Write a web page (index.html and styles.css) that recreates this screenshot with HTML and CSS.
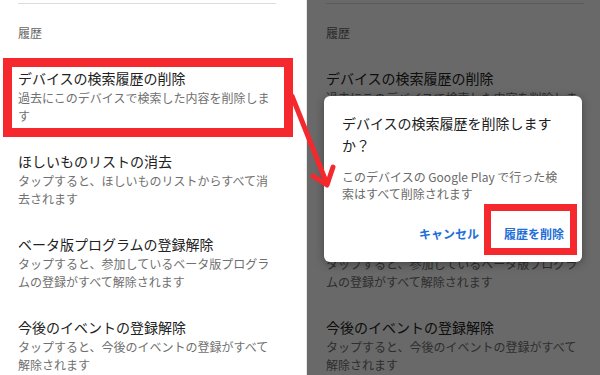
FILE: index.html
```html
<!DOCTYPE html>
<html lang="ja">
<head>
    <meta charset="UTF-8">
    <meta name="viewport" content="width=device-width, initial-scale=1.0">
    <title>検索履歴の削除</title>
    <link rel="stylesheet" href="styles.css">
</head>
<body>

    <div class="shot">
        <section class="screen">
            <div class="divider"></div>
            <div class="section-label">履歴</div>
            <ul class="settings">
                <li class="setting">
                    <div class="setting-title">デバイスの検索履歴の削除</div>
                    <div class="setting-desc">過去にこのデバイスで検索した内容を削除します</div>
                </li>
                <li class="setting">
                    <div class="setting-title">ほしいものリストの消去</div>
                    <div class="setting-desc">タップすると、ほしいものリストからすべて消去されます</div>
                </li>
                <li class="setting">
                    <div class="setting-title">ベータ版プログラムの登録解除</div>
                    <div class="setting-desc">タップすると、参加しているベータ版プログラムの登録がすべて解除されます</div>
                </li>
                <li class="setting">
                    <div class="setting-title">今後のイベントの登録解除</div>
                    <div class="setting-desc">タップすると、今後のイベントの登録がすべて解除されます</div>
                </li>
            </ul>
        </section>

        <section class="screen screen-right">
            <div class="divider"></div>
            <div class="section-label">履歴</div>
            <ul class="settings">
                <li class="setting">
                    <div class="setting-title">デバイスの検索履歴の削除</div>
                    <div class="setting-desc">過去にこのデバイスで検索した内容を削除します</div>
                </li>
                <li class="setting">
                    <div class="setting-title">ほしいものリストの消去</div>
                    <div class="setting-desc">タップすると、ほしいものリストからすべて消去されます</div>
                </li>
                <li class="setting">
                    <div class="setting-title">ベータ版プログラムの登録解除</div>
                    <div class="setting-desc">タップすると、参加しているベータ版プログラムの登録がすべて解除されます</div>
                </li>
                <li class="setting">
                    <div class="setting-title">今後のイベントの登録解除</div>
                    <div class="setting-desc">タップすると、今後のイベントの登録がすべて解除されます</div>
                </li>
            </ul>

            <div class="scrim"></div>

            <div class="dialog">
                <div class="dialog-title">デバイスの検索履歴を削除しますか？</div>
                <div class="dialog-text">このデバイスの Google Play で行った検索はすべて削除されます</div>
                <div class="dialog-actions">
                    <button class="dialog-btn">キャンセル</button>
                    <button class="dialog-btn">履歴を削除</button>
                </div>
            </div>
        </section>

        <!-- annotations -->
        <div class="mark mark-item"></div>
        <div class="mark mark-button"></div>
        <svg class="arrow" width="600" height="375" viewBox="0 0 600 375">
            <path d="M292 96 L327 184 M313 176 L327 185 L333 167" fill="none" stroke="#f5282e" stroke-width="5" stroke-linecap="round" stroke-linejoin="round"/>
        </svg>
    </div>

</body>
</html>
```

FILE: styles.css
```css
* {
    margin: 0;
    padding: 0;
    box-sizing: border-box;
}

body {
    font-family: "Noto Sans CJK JP", "Noto Sans", sans-serif;
    background-color: #fff;
    width: 600px;
    height: 375px;
    overflow: hidden;
}

.shot {
    position: relative;
    display: flex;
    width: 600px;
    height: 375px;
}

.screen {
    width: 306px;
    height: 375px;
    padding: 3px 0 0 18px;
    background-color: #fff;
    overflow: hidden;
}

.screen-right {
    position: relative;
    width: 294px;
    padding-left: 19px;
    border-left: 1px solid #e6e6e6;
}

.divider {
    width: 258px;
    height: 1px;
    background-color: #dcdcdc;
}

.section-label {
    margin-top: 20px;
    font-size: 12px;
    line-height: 18px;
    color: #666;
}

.settings {
    list-style: none;
    display: flex;
    flex-direction: column;
    gap: 26px;
    margin-top: 26px;
    width: 260px;
}

.setting-title {
    font-size: 14px;
    line-height: 20px;
    color: #222;
}

.setting-desc {
    margin-top: 1px;
    font-size: 12px;
    line-height: 18px;
    color: #707070;
}

.scrim {
    position: absolute;
    top: 0;
    left: 0;
    right: 0;
    bottom: 0;
    background-color: rgba(0, 0, 0, 0.59);
}

.dialog {
    position: absolute;
    left: 17px;
    top: 96px;
    width: 258px;
    height: 166px;
    padding: 16px 18px 0 18px;
    background-color: #fff;
    border-radius: 6px;
    box-shadow: 0 2px 10px rgba(0, 0, 0, 0.35);
}

.dialog-title {
    font-size: 14px;
    line-height: 22px;
    color: #202020;
}

.dialog-text {
    margin-top: 12px;
    font-size: 12px;
    line-height: 17px;
    color: #6a6a6a;
}

.dialog-actions {
    display: flex;
    justify-content: flex-end;
    align-items: center;
    gap: 25px;
    height: 32px;
    margin-top: 15px;
}

.dialog-btn {
    border: none;
    background: none;
    font-family: inherit;
    font-size: 12px;
    font-weight: 700;
    color: #1f6fd8;
}

.mark {
    position: absolute;
    border: 9px solid #f5282e;
}

.mark-item {
    left: 3px;
    top: 58px;
    width: 290px;
    height: 79px;
}

.mark-button {
    left: 484px;
    top: 204px;
    width: 93px;
    height: 51px;
    border-width: 7px;
}

.arrow {
    position: absolute;
    left: 0;
    top: 0;
    pointer-events: none;
}
```
